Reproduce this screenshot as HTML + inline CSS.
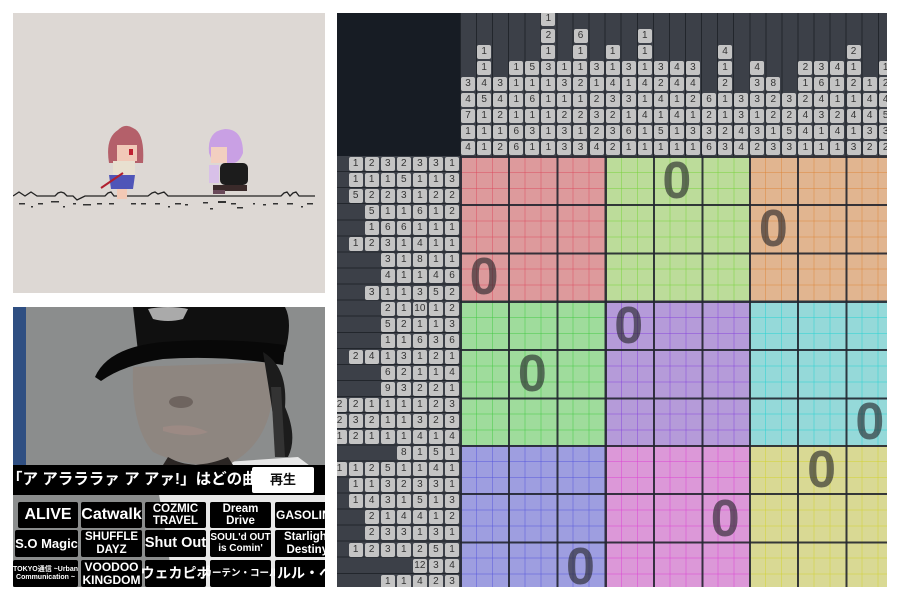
<!DOCTYPE html>
<html><head><meta charset="utf-8"><style>
*{margin:0;padding:0;box-sizing:border-box}
body{width:900px;height:600px;background:#fff;position:relative;overflow:hidden;font-family:"Liberation Sans","Noto Sans CJK JP",sans-serif}
.abs{position:absolute}
#game{left:13px;top:13px;width:312px;height:280px;background:#ddd8d4;overflow:hidden}
#photo{left:13px;top:307px;width:312px;height:280px;overflow:hidden;background:#8a8c8c}
#pz{left:337px;top:13px;width:550px;height:574px;overflow:hidden;background:#fff;--c:16.07px}
.hdr{position:absolute;left:123px;top:-1.6px;width:434px;height:144.6px;background:repeating-linear-gradient(90deg,#22262c 0 1px,#3c4048 1px 16.07px)}
.hrow{display:flex;height:16.07px}
.hrow span,.rrow span{width:16.07px;height:16.07px;flex:none;display:flex;align-items:center;justify-content:center}
.hrow span b,.rrow span b{display:block;width:14px;height:14px;background:#c4c4c4;border-radius:2px;font:400 10px/14px "Liberation Sans",sans-serif;color:#333;text-align:center}
.rows{position:absolute;left:0;top:143px;width:123px;height:434px;background:repeating-linear-gradient(180deg,#3c4048 0 15.07px,#22262c 15.07px 16.07px)}
.rrow{display:flex;justify-content:flex-end;height:16.07px}
.blk{position:absolute;width:144.63px;height:144.63px}
.z{position:absolute;width:48.2px;height:48.2px;text-align:center;font:700 52px/50px "Liberation Sans",sans-serif;color:rgba(35,35,40,.62)}
.q{position:absolute;background:#000;color:#fff;font-weight:700;text-align:center;border-radius:2px;display:flex;align-items:center;justify-content:center;line-height:1.05}
</style></head><body>

<div id="game" class="abs">
<svg width="312" height="280" style="position:absolute;left:0;top:0">
<polyline fill="none" stroke="#222" stroke-width="1.3" points="0,183 3,181 6,179 9,181 12,183 15,181 18,179 21,181 24,183 42,183 45,180 48,179 51,180 54,183 60,183 64,187 68,185 72,183 92,183 95,180 98,179 101,183 135,183 139,180 142,179 145,181 148,180 151,179 155,183 255,183 260,183 268,183 271,180 274,179 277,183 280,180 283,179 286,183 302,183"/>
<g fill="#333">
<rect x="6" y="190" width="6" height="1.5"/><rect x="18" y="193" width="2" height="1.5"/><rect x="25" y="190" width="5" height="1.5"/><rect x="38" y="188" width="8" height="1.5"/><rect x="50" y="193" width="2" height="1.5"/><rect x="60" y="190" width="3" height="1.5"/><rect x="70" y="191" width="8" height="1.5"/><rect x="84" y="190" width="5" height="1.5"/><rect x="96" y="190" width="5" height="1.5"/><rect x="118" y="190" width="5" height="1.5"/><rect x="128" y="190" width="5" height="1.5"/><rect x="142" y="190" width="5" height="1.5"/><rect x="155" y="193" width="2" height="1.5"/><rect x="162" y="190" width="6" height="1.5"/><rect x="172" y="191" width="3" height="1.5"/><rect x="190" y="189" width="5" height="1.5"/><rect x="197" y="195" width="3" height="1.5"/><rect x="205" y="188" width="8" height="2"/><rect x="218" y="190" width="5" height="1.5"/><rect x="224" y="194" width="6" height="1.5"/><rect x="240" y="190" width="2" height="1.5"/><rect x="250" y="191" width="3" height="1.5"/><rect x="260" y="190" width="5" height="1.5"/><rect x="274" y="190" width="6" height="1.5"/><rect x="288" y="193" width="2" height="1.5"/><rect x="294" y="190" width="6" height="1.5"/>
</g>
<!-- char 1 -->
<path d="M96 150 Q92 125 105 117 Q112 110 120 115 Q132 120 130 150 Z" fill="#b4606a"/>
<rect x="104" y="132" width="20" height="16" fill="#f1c9b8"/>
<path d="M104 132 Q112 122 124 132 L124 128 Q112 118 104 128Z" fill="#b4606a"/>
<rect x="116" y="136" width="4" height="6" fill="#c02030"/>
<rect x="100" y="148" width="22" height="14" fill="#e8e0d0"/>
<path d="M96 162 L122 162 L120 176 L98 176Z" fill="#4f55b8"/>
<rect x="104" y="176" width="10" height="10" fill="#f3c9b5"/>
<line x1="88" y1="175" x2="110" y2="160" stroke="#b02030" stroke-width="2"/>
<!-- char 2 -->
<path d="M196 140 Q194 118 212 116 Q230 116 230 140 Q226 150 220 150 L200 150Z" fill="#c9a0e4"/>
<rect x="198" y="134" width="16" height="16" fill="#f2cfc0"/>
<rect x="207" y="150" width="28" height="22" rx="5" fill="#1c1c1c"/>
<rect x="196" y="152" width="10" height="18" fill="#d8c0e8"/>
<rect x="200" y="172" width="34" height="6" fill="#3a2a2a"/>
<rect x="200" y="177" width="12" height="4" fill="#6a4a5a"/>
</svg>
</div>

<div id="photo" class="abs">
<svg width="312" height="280" style="position:absolute;left:0;top:0">
<rect x="0" y="0" width="312" height="280" fill="#8b8d8d"/>
<rect x="0" y="0" width="13" height="160" fill="#2f4f82"/>
<path d="M140 160 Q150 200 160 280 L312 280 L312 170 L285 150Z" fill="#e8e8e8"/>
<path d="M120 60 Q118 120 140 145 Q170 160 215 158 Q250 140 258 100 L262 55 Z" fill="#8e8680"/>
<path d="M155 150 Q180 165 215 150 L220 158 Q185 175 150 158Z" fill="#2b2624"/>
<path d="M150 120 Q175 115 195 125 Q178 132 150 124Z" fill="#9c8a84"/>
<ellipse cx="168" cy="95" rx="12" ry="6" fill="#6e645f"/>
<path d="M120 0 L272 0 Q280 15 272 45 L125 45 Z" fill="#101010"/>
<path d="M82 70 Q95 40 150 35 Q210 30 272 38 L270 58 Q210 48 150 52 Q110 58 88 74 Z" fill="#080808"/>
<path d="M135 2 Q155 -2 175 2 L170 12 Q155 16 140 12Z" fill="#aaa"/>
<path d="M250 45 Q275 60 272 100 Q285 130 275 150 L265 150 Q262 120 258 95Z" fill="#1c1c1c"/>
<path d="M258 80 L268 80 L272 150 L262 150Z" fill="#333"/>
</svg>
<div class="abs" style="left:0;top:158px;width:312px;height:30px;background:#000"></div>
<div class="abs" style="left:-6px;top:162px;color:#fff;font-size:15.5px;font-weight:700;white-space:nowrap;line-height:22px">「ア アラララァ ア アァ!」はどの曲？</div>
<div class="abs" style="left:239px;top:160px;width:62px;height:26px;background:#fff;border-radius:2px;font-size:13px;font-weight:700;text-align:center;line-height:26px;color:#111">再生</div>
<div class="q" style="left:5px;top:195px;width:60px;height:26px;font-size:16px">ALIVE</div>
<div class="q" style="left:68px;top:195px;width:61px;height:26px;font-size:16px">Catwalk</div>
<div class="q" style="left:132px;top:195px;width:61px;height:26px;font-size:11.5px">COZMIC<br>TRAVEL</div>
<div class="q" style="left:197px;top:195px;width:61px;height:26px;font-size:11.5px">Dream<br>Drive</div>
<div class="q" style="left:262px;top:195px;width:60px;height:26px;font-size:12px;justify-content:flex-start;padding-left:1px">GASOLINE</div>
<div class="q" style="left:2px;top:223px;width:63px;height:27px;font-size:13px">S.O Magic</div>
<div class="q" style="left:68px;top:223px;width:61px;height:27px;font-size:11.5px">SHUFFLE<br>DAYZ</div>
<div class="q" style="left:132px;top:223px;width:61px;height:27px;font-size:14.5px;white-space:nowrap">Shut Out</div>
<div class="q" style="left:197px;top:223px;width:61px;height:27px;font-size:10px">SOUL'd OUT<br>is Comin'</div>
<div class="q" style="left:262px;top:223px;width:60px;height:27px;font-size:11.5px;justify-content:flex-start;padding-left:9px;white-space:nowrap">Starlight<br>Destiny</div>
<div class="q" style="left:0;top:253px;width:65px;height:27px;font-size:7px;white-space:nowrap">TOKYO通信 ~Urban<br>Communication ~</div>
<div class="q" style="left:68px;top:253px;width:61px;height:27px;font-size:12px">VOODOO<br>KINGDOM</div>
<div class="q" style="left:132px;top:253px;width:61px;height:27px;font-size:14px;white-space:nowrap">ウェカピポ</div>
<div class="q" style="left:197px;top:253px;width:61px;height:27px;font-size:9.5px;white-space:nowrap">カーテン・コール</div>
<div class="q" style="left:262px;top:253px;width:60px;height:27px;font-size:14px;white-space:nowrap;justify-content:flex-start;padding-left:2px">ルル・ベル</div>
</div>

<div id="pz" class="abs">
<div class="abs" style="left:0;top:0;width:123px;height:143px;background:#171c24"></div>
<div class="hdr">
<div class="hrow"><i style="width:80.35px"></i><span><b>1</b></span></div>
<div class="hrow"><i style="width:80.35px"></i><span><b>2</b></span><span></span><span><b>6</b></span><span></span><span></span><span></span><span><b>1</b></span></div>
<div class="hrow"><span></span><span><b>1</b></span><span></span><span></span><span></span><span><b>1</b></span><span></span><span><b>1</b></span><span></span><span><b>1</b></span><span></span><span><b>1</b></span><span></span><span></span><span></span><span></span><span><b>4</b></span><span></span><span></span><span></span><span></span><span></span><span></span><span></span><span><b>2</b></span></div>
<div class="hrow"><span></span><span><b>1</b></span><span></span><span><b>1</b></span><span><b>5</b></span><span><b>3</b></span><span><b>1</b></span><span><b>1</b></span><span><b>3</b></span><span><b>1</b></span><span><b>3</b></span><span><b>1</b></span><span><b>3</b></span><span><b>4</b></span><span><b>3</b></span><span></span><span><b>1</b></span><span></span><span><b>4</b></span><span></span><span></span><span><b>2</b></span><span><b>3</b></span><span><b>4</b></span><span><b>1</b></span><span></span><span><b>1</b></span></div>
<div class="hrow"><span><b>3</b></span><span><b>4</b></span><span><b>3</b></span><span><b>1</b></span><span><b>1</b></span><span><b>1</b></span><span><b>3</b></span><span><b>2</b></span><span><b>1</b></span><span><b>4</b></span><span><b>1</b></span><span><b>4</b></span><span><b>2</b></span><span><b>4</b></span><span><b>4</b></span><span></span><span><b>2</b></span><span></span><span><b>3</b></span><span><b>8</b></span><span></span><span><b>1</b></span><span><b>6</b></span><span><b>1</b></span><span><b>2</b></span><span><b>1</b></span><span><b>2</b></span></div>
<div class="hrow"><span><b>4</b></span><span><b>5</b></span><span><b>4</b></span><span><b>1</b></span><span><b>6</b></span><span><b>1</b></span><span><b>1</b></span><span><b>1</b></span><span><b>2</b></span><span><b>3</b></span><span><b>3</b></span><span><b>1</b></span><span><b>4</b></span><span><b>1</b></span><span><b>2</b></span><span><b>6</b></span><span><b>1</b></span><span><b>3</b></span><span><b>3</b></span><span><b>2</b></span><span><b>3</b></span><span><b>2</b></span><span><b>4</b></span><span><b>1</b></span><span><b>1</b></span><span><b>4</b></span><span><b>4</b></span></div>
<div class="hrow"><span><b>7</b></span><span><b>1</b></span><span><b>2</b></span><span><b>1</b></span><span><b>1</b></span><span><b>1</b></span><span><b>2</b></span><span><b>2</b></span><span><b>3</b></span><span><b>2</b></span><span><b>1</b></span><span><b>4</b></span><span><b>1</b></span><span><b>4</b></span><span><b>1</b></span><span><b>2</b></span><span><b>1</b></span><span><b>3</b></span><span><b>1</b></span><span><b>2</b></span><span><b>2</b></span><span><b>4</b></span><span><b>3</b></span><span><b>2</b></span><span><b>4</b></span><span><b>4</b></span><span><b>5</b></span></div>
<div class="hrow"><span><b>1</b></span><span><b>1</b></span><span><b>1</b></span><span><b>6</b></span><span><b>3</b></span><span><b>1</b></span><span><b>3</b></span><span><b>1</b></span><span><b>2</b></span><span><b>3</b></span><span><b>6</b></span><span><b>1</b></span><span><b>5</b></span><span><b>1</b></span><span><b>3</b></span><span><b>3</b></span><span><b>2</b></span><span><b>4</b></span><span><b>3</b></span><span><b>1</b></span><span><b>5</b></span><span><b>4</b></span><span><b>1</b></span><span><b>4</b></span><span><b>1</b></span><span><b>3</b></span><span><b>3</b></span></div>
<div class="hrow"><span><b>4</b></span><span><b>1</b></span><span><b>2</b></span><span><b>6</b></span><span><b>1</b></span><span><b>1</b></span><span><b>3</b></span><span><b>3</b></span><span><b>4</b></span><span><b>2</b></span><span><b>1</b></span><span><b>1</b></span><span><b>1</b></span><span><b>1</b></span><span><b>1</b></span><span><b>6</b></span><span><b>3</b></span><span><b>4</b></span><span><b>2</b></span><span><b>3</b></span><span><b>3</b></span><span><b>1</b></span><span><b>1</b></span><span><b>1</b></span><span><b>3</b></span><span><b>2</b></span><span><b>2</b></span></div>
</div>

<div class="rows">
<div class="rrow"><span><b>1</b></span><span><b>2</b></span><span><b>3</b></span><span><b>2</b></span><span><b>3</b></span><span><b>3</b></span><span><b>1</b></span></div>
<div class="rrow"><span><b>1</b></span><span><b>1</b></span><span><b>1</b></span><span><b>5</b></span><span><b>1</b></span><span><b>1</b></span><span><b>3</b></span></div>
<div class="rrow"><span><b>5</b></span><span><b>2</b></span><span><b>2</b></span><span><b>3</b></span><span><b>1</b></span><span><b>2</b></span><span><b>2</b></span></div>
<div class="rrow"><span><b>5</b></span><span><b>1</b></span><span><b>1</b></span><span><b>6</b></span><span><b>1</b></span><span><b>2</b></span></div>
<div class="rrow"><span><b>1</b></span><span><b>6</b></span><span><b>6</b></span><span><b>1</b></span><span><b>1</b></span><span><b>1</b></span></div>
<div class="rrow"><span><b>1</b></span><span><b>2</b></span><span><b>3</b></span><span><b>1</b></span><span><b>4</b></span><span><b>1</b></span><span><b>1</b></span></div>
<div class="rrow"><span><b>3</b></span><span><b>1</b></span><span><b>8</b></span><span><b>1</b></span><span><b>1</b></span></div>
<div class="rrow"><span><b>4</b></span><span><b>1</b></span><span><b>1</b></span><span><b>4</b></span><span><b>6</b></span></div>
<div class="rrow"><span><b>3</b></span><span><b>1</b></span><span><b>1</b></span><span><b>3</b></span><span><b>5</b></span><span><b>2</b></span></div>
<div class="rrow"><span><b>2</b></span><span><b>1</b></span><span><b>10</b></span><span><b>1</b></span><span><b>2</b></span></div>
<div class="rrow"><span><b>5</b></span><span><b>2</b></span><span><b>1</b></span><span><b>1</b></span><span><b>3</b></span></div>
<div class="rrow"><span><b>1</b></span><span><b>1</b></span><span><b>6</b></span><span><b>3</b></span><span><b>6</b></span></div>
<div class="rrow"><span><b>2</b></span><span><b>4</b></span><span><b>1</b></span><span><b>3</b></span><span><b>1</b></span><span><b>2</b></span><span><b>1</b></span></div>
<div class="rrow"><span><b>6</b></span><span><b>2</b></span><span><b>1</b></span><span><b>1</b></span><span><b>4</b></span></div>
<div class="rrow"><span><b>9</b></span><span><b>3</b></span><span><b>2</b></span><span><b>2</b></span><span><b>1</b></span></div>
<div class="rrow"><span><b>2</b></span><span><b>2</b></span><span><b>1</b></span><span><b>1</b></span><span><b>1</b></span><span><b>1</b></span><span><b>2</b></span><span><b>3</b></span></div>
<div class="rrow"><span><b>2</b></span><span><b>3</b></span><span><b>2</b></span><span><b>1</b></span><span><b>1</b></span><span><b>3</b></span><span><b>2</b></span><span><b>3</b></span></div>
<div class="rrow"><span><b>1</b></span><span><b>2</b></span><span><b>1</b></span><span><b>1</b></span><span><b>1</b></span><span><b>4</b></span><span><b>1</b></span><span><b>4</b></span></div>
<div class="rrow"><span><b>8</b></span><span><b>1</b></span><span><b>5</b></span><span><b>1</b></span></div>
<div class="rrow"><span><b>1</b></span><span><b>1</b></span><span><b>2</b></span><span><b>5</b></span><span><b>1</b></span><span><b>1</b></span><span><b>4</b></span><span><b>1</b></span></div>
<div class="rrow"><span><b>1</b></span><span><b>1</b></span><span><b>3</b></span><span><b>2</b></span><span><b>3</b></span><span><b>3</b></span><span><b>1</b></span></div>
<div class="rrow"><span><b>1</b></span><span><b>4</b></span><span><b>3</b></span><span><b>1</b></span><span><b>5</b></span><span><b>1</b></span><span><b>3</b></span></div>
<div class="rrow"><span><b>2</b></span><span><b>1</b></span><span><b>4</b></span><span><b>4</b></span><span><b>1</b></span><span><b>2</b></span></div>
<div class="rrow"><span><b>2</b></span><span><b>3</b></span><span><b>3</b></span><span><b>1</b></span><span><b>3</b></span><span><b>1</b></span></div>
<div class="rrow"><span><b>1</b></span><span><b>2</b></span><span><b>3</b></span><span><b>1</b></span><span><b>2</b></span><span><b>5</b></span><span><b>1</b></span></div>
<div class="rrow"><span><b>12</b></span><span><b>3</b></span><span><b>4</b></span></div>
<div class="rrow"><span><b>1</b></span><span><b>1</b></span><span><b>4</b></span><span><b>2</b></span><span><b>3</b></span></div>
</div>

<style>
.blk{background-image:
repeating-linear-gradient(90deg,rgba(35,38,48,.9) 0 2px,transparent 2px 48.21px),
repeating-linear-gradient(180deg,rgba(35,38,48,.9) 0 2px,transparent 2px 48.21px),
repeating-linear-gradient(90deg,var(--l) 0 1px,transparent 1px 16.07px),
repeating-linear-gradient(180deg,var(--l) 0 1px,transparent 1px 16.07px);}
</style>
<div class="blk" style="left:123px;top:143px;background-color:#dd9a9c;--l:rgba(220,70,90,.45)"></div>
<div class="blk" style="left:267.6px;top:143px;background-color:#bcdc9a;--l:rgba(120,210,60,.5)"></div>
<div class="blk" style="left:412.3px;top:143px;background-color:#e1b590;--l:rgba(220,130,50,.45)"></div>
<div class="blk" style="left:123px;top:287.6px;background-color:#9fdc9c;--l:rgba(60,200,60,.45)"></div>
<div class="blk" style="left:267.6px;top:287.6px;background-color:#b59bd9;--l:rgba(130,60,220,.45)"></div>
<div class="blk" style="left:412.3px;top:287.6px;background-color:#95d9d9;--l:rgba(40,210,210,.5)"></div>
<div class="blk" style="left:123px;top:432.3px;background-color:#9e9ee0;--l:rgba(80,80,220,.45)"></div>
<div class="blk" style="left:267.6px;top:432.3px;background-color:#dc98d8;--l:rgba(220,60,210,.45)"></div>
<div class="blk" style="left:412.3px;top:432.3px;background-color:#d9d994;--l:rgba(210,210,50,.5)"></div>

<div class="z" style="left:315.8px;top:143px">0</div>
<div class="z" style="left:412.3px;top:191.2px">0</div>
<div class="z" style="left:123px;top:239.4px">0</div>
<div class="z" style="left:267.6px;top:287.6px">0</div>
<div class="z" style="left:171.2px;top:335.8px">0</div>
<div class="z" style="left:508.7px;top:384px">0</div>
<div class="z" style="left:460.5px;top:432.3px">0</div>
<div class="z" style="left:364.1px;top:480.5px">0</div>
<div class="z" style="left:219.4px;top:528.7px">0</div>
</div>
</body></html>
